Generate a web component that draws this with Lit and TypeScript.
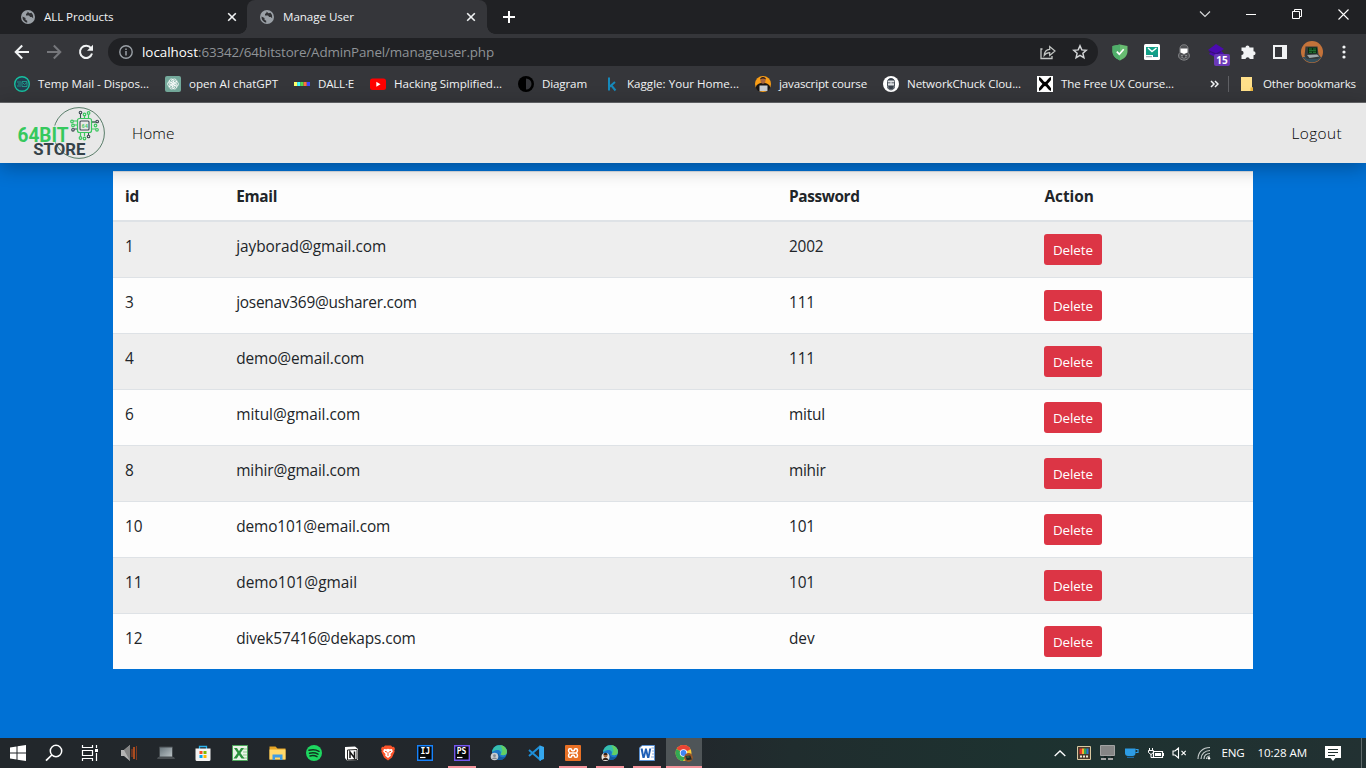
import { LitElement, html, css, svg, TemplateResult } from "lit";
import { customElement, property } from "lit/decorators.js";

/** A single line of text tracked so that it fills the given width. */
@customElement("fit-text")
class FitText extends LitElement {
  @property({ type: Number }) w = 0;
  @property() text = "";
  static styles = css`
    :host { display: inline-block; white-space: nowrap; flex: none; }
    .line { display: inline-block; white-space: pre; }
  `;
  updated() {
    const line = this.renderRoot.querySelector(".line") as HTMLElement;
    line.style.letterSpacing = "0px";
    const natural = line.getBoundingClientRect().width;
    line.style.letterSpacing = `${(this.w - natural) / this.text.length}px`;
    this.style.width = `${this.w}px`;
  }
  render() {
    return html`<span class="line">${this.text}</span>`;
  }
}

const fit = (text: string, w: number) => html`<fit-text .text=${text} .w=${w}></fit-text>`;
const icon = (w: number, h: number, body: unknown) =>
  html`<svg class="icon" width=${w} height=${h} viewBox="0 0 ${w} ${h}" fill="none">${body}</svg>`;

const globe = icon(14, 14, svg`<circle cx="7" cy="7" r="7" fill="#9aa0a6"/>
  <path d="M1.500 6.500 4.500 8v1.800l1.700 1v1.900A5.800 5.800 0 0 1 1.500 6.500ZM6.500 1.500v1.300L5 4v1.500h3l1.200 1.500h1.500l1.500 1.300a5.800 5.800 0 0 0-1.700-5.500L8.500 3.300z" fill="#303134"/>`);
const close = icon(10, 10, svg`<path d="m1.200 1.200 7.600 7.600M8.800 1.200 1.200 8.800" stroke="#f1f3f4" stroke-width="1.600"/>`);
const plus = icon(12, 12, svg`<path d="M6 0v12M0 6h12" stroke="#fff" stroke-width="2"/>`);
const winIcons = [
  icon(12, 8, svg`<path d="m1 1.500 5 5 5-5" stroke="#d5d6d8" stroke-width="1.200"/>`),
  icon(10, 10, svg`<path d="M0 5.500h10" stroke="#fff"/>`),
  icon(10, 10, svg`<path d="M.5 2.500h7v7h-7zM2.500 2.500v-2h7v7h-2" stroke="#fff"/>`),
  icon(11, 11, svg`<path d="m.5.5 10 10M10.500.5l-10 10" stroke="#fff" stroke-width="1.100"/>`),
];
const navIcons = [
  icon(16, 16, svg`<path d="M15 8H2M8.200 1.500 1.700 8l6.500 6.500" stroke="#f1f3f4" stroke-width="2"/>`),
  icon(16, 16, svg`<path d="M1 8h13M7.800 1.500 14.300 8l-6.500 6.500" stroke="#76777b" stroke-width="2"/>`),
  icon(16, 16, svg`<path d="M13 4.200A6.100 6.100 0 1 0 14 9.500" stroke="#f1f3f4" stroke-width="2"/><path d="M15 .8v6H9z" fill="#f1f3f4"/>`),
];
const info = icon(14, 14, svg`<circle cx="7" cy="7" r="6.200" stroke="#9aa0a6" stroke-width="1.400"/><path d="M7 6v4.500M7 3.400v1.500" stroke="#9aa0a6" stroke-width="1.500"/>`);
const share = icon(16, 16, svg`<path d="M2.500 5H1v9.500h11V12" stroke="#c4c7c5" stroke-width="1.300"/><path d="M4.200 11.500C4.500 7.500 6.500 5.600 9.700 5.400V2.500L15 7l-5.300 4.500V8.600c-2.300 0-4 .8-5.500 2.900Z" stroke="#c4c7c5" stroke-width="1.200"/>`);
const star = icon(16, 16, svg`<path d="m8 1.800 1.800 4.100 4.400.4-3.300 3 1 4.400L8 11.400l-3.900 2.300 1-4.400-3.300-3 4.400-.4z" stroke="#d2d4d6" stroke-width="1.500"/>`);

const extensions = [
  icon(16, 17, svg`<path d="M8 .5 15.500 2v5.500c0 4.500-4 7.500-7.500 9-3.500-1.500-7.500-4.500-7.500-9V2z" fill="#68bc71"/><path d="M8 .5V16.500C4.500 15 .5 12 .5 7.500V2z" fill="#4fae6a"/><path d="m4.800 7.600 2.500 2.600 4.400-5" stroke="#fff" stroke-width="1.700"/>`),
  icon(16, 16, svg`<rect width="16" height="16" rx="1.500" fill="#fff"/><path d="M2 3h12v8H2z" fill="#12a087"/><path d="m4 4 4 3.500L12.500 4" stroke="#fff" stroke-width="1.400"/><path d="M2 12.200h6v1H2z" fill="#8b98a0"/><path d="M9 11h5v2H9z" fill="#1b8f90"/>`),
  icon(14, 17, svg`<path d="M3 5C3 1.500 5 .8 7 .8s4 .7 4 4.200v3.500c2 2 2 5-.5 6.500C8 16.500 6 16.500 3.500 15 1 13.500 1 10.500 3 8.500z" fill="#505154" stroke="#86878a"/><path d="M3.500 4.500h7V8.500L7 10 3.500 8.500z" fill="#fff"/><path d="M4 11.500h6M4.500 13.500h5" stroke="#8d8e90"/><circle cx="7" cy="12.500" r="1.800" fill="#3a3b3e" stroke="#8d8e90" stroke-width=".7"/>`),
  html`<span class="badged">${icon(18, 16, svg`<path d="m9 0 8 5-3 2 3 2.500L10 14 2 10l2-2.500L1 6z" fill="#4b0bb0"/><path d="m2 7 7 3 5-2.500" stroke="#37107d" stroke-width="1.200"/>`)}<span class="count">15</span></span>`,
  icon(16, 16, svg`<path d="M1.500 3.500h4a2 2 0 1 1 4 0h4V7.200a2 2 0 1 1 0 4.100V15H9.800a2.200 2.200 0 0 0-4.300 0h-4v-4a2.100 2.100 0 0 0 0-4.200z" fill="#f1f3f4"/>`),
  icon(14, 14, svg`<path d="M1 1h12v12H1z" stroke="#f1f3f4" stroke-width="2"/><path d="M9 1h4v12H9z" fill="#f1f3f4"/>`),
  icon(22, 22, svg`<circle cx="11" cy="11" r="11" fill="#c4733a"/><path d="M1.500 16a11 11 0 0 0 19 0z" fill="#334f5c"/><path d="M4.500 5.500h12l1 8 2 2-3 2.500H6l-2.500-3z" fill="#343a3b"/><path d="M7 6.500h9v6H7z" fill="#072c10"/><path d="M8 8h3M12 8h3M8 9.700h7M8 11.300h3M12 11.300h3" stroke="#35a04b" stroke-width=".7"/><path d="m6 14 10-.5 2.500 2-10 1.500z" fill="#9ca8aa"/>`),
  icon(4, 16, svg`<circle cx="2" cy="3" r="1.600" fill="#f1f3f4"/><circle cx="2" cy="8" r="1.600" fill="#f1f3f4"/><circle cx="2" cy="13" r="1.600" fill="#f1f3f4"/>`),
];

const bookmarks: [string, number, TemplateResult][] = [
  ["Temp Mail - Dispos...", 111, icon(16, 16, svg`<circle cx="8" cy="8" r="7.300" fill="#233f50" stroke="#17c1a0" stroke-width="1.400"/><path d="M3 6h4M4 8h3M3 10h4M8 5.500h5v5H8zM8.500 6.500 10.500 8.500 13 6.500" stroke="#20a997" stroke-width=".8"/>`)],
  ["open AI chatGPT", 89, icon(16, 16, svg`<rect width="16" height="16" rx="2" fill="#74a99b"/><g stroke="#fff" stroke-width=".8">${[0, 60, 120, 180, 240, 300].map(a => svg`<path transform="rotate(${a} 8 8)" d="M6 9.200V4.800l2.200-1.500c2-1 4 .6 3.700 2.700L8 8.300"/>`)}</g>`)],
  ["DALL·E", 36, icon(16, 16, svg`<path d="M0 6h3.200v4H0z" fill="#ffff66"/><path d="M3.200 6h3.200v4H3.200z" fill="#42ffff"/><path d="M6.400 6h3.200v4H6.400z" fill="#51da4c"/><path d="M9.600 6h3.200v4H9.600z" fill="#ff6e3c"/><path d="M12.800 6H16v4h-3.200z" fill="#3c46ff"/>`)],
  ["Hacking Simplified...", 108, icon(16, 16, svg`<rect y="2.500" width="16" height="11.500" rx="2.500" fill="#f00"/><path d="M6.300 5.800v4.900l4.200-2.450z" fill="#fff"/>`)],
  ["Diagram", 45, icon(16, 16, svg`<circle cx="8" cy="8" r="8" fill="#000"/><path d="M8 2.500a5.500 5.500 0 0 1 0 11z" fill="#35363a"/>`)],
  ["Kaggle: Your Home...", 112, icon(16, 16, svg`<path d="M6 1.500v13M12 6 6.500 10.800M8 9l4.500 5.500" stroke="#1689bb" stroke-width="2"/>`)],
  ["javascript course", 88, icon(16, 16, svg`<circle cx="8" cy="8" r="8" fill="#f99d16"/><path d="M.8 12c0-3 2.700-5 7.200-5s7.200 2 7.200 5L13 15H3z" fill="#171413"/><ellipse cx="8" cy="4.500" rx="2.500" ry="3.300" fill="#a9673f"/><path d="M5 3.500C5 0 11 0 11 3.500 9 2.300 7 2.300 5 3.500" fill="#2a1a14"/><path d="M4.500 9.500h8V15h-8z" fill="#c9cdd2"/>`)],
  ["NetworkChuck Clou...", 114, icon(16, 16, svg`<circle cx="8" cy="8" r="8" fill="#fff"/><path d="M4.500 5.500C4.500 1.500 11.500 1.500 11.500 5.500v5C11.500 15 4.500 15 4.500 10.500z" stroke="#4a525b" stroke-width="1" fill="#dde0e3"/><path d="M5 4.500h6V3.500c-1.500-1.500-4.500-1.500-6 0zM5 9.500h6l-.5 3c-1.500 1-3.500 1-5 0z" fill="#38404a"/><path d="M5 6.800h2.500M8.500 6.800H11" stroke="#38404a" stroke-width=".8"/>`)],
  ["The Free UX Course...", 113, icon(16, 16, svg`<path d="M0 0h16v16H0z" fill="#fff"/><path d="M2 2.500c2 0 3 5 6 5s4-5 6-5M2 13.500c2 0 3-5 6-5s4 5 6 5" stroke="#000" stroke-width="2.800"/>`)],
];

const edge = (b: unknown) => icon(18, 18, svg`<circle cx="9.500" cy="8.500" r="7.500" fill="#1c78c8"/><path d="M2 8C3 2 8 .5 12 1.500c4 1 6 5 4.500 8-1 2-4 2-6 1 1.500-3-1-5-4-4.500C4 6.500 2.500 8 2 8" fill="#36bfae"/><path d="M10 1.200c5 0 8 5 6.500 8.300-1 2-4 2-6 1 3-3 2-7-.5-9.300" fill="#63cf62"/><path d="M8.500 9c0 4 4 5 7.500 3.500-3 4.500-8 4-10 1.500z" fill="#125a9d"/>${b}`);
const taskbar: { i: TemplateResult; state?: string }[] = [
  { i: icon(16, 16, svg`<path d="M0 2.400 6.500 1.500v6H0zM7.500 1.300 16 .1v7.400H7.500zM0 8.500h6.500v6L0 13.600zM7.500 8.500H16v7.400l-8.500-1.200z" fill="#fff"/>`) },
  { i: icon(18, 18, svg`<circle cx="11" cy="7" r="5.700" stroke="#fff" stroke-width="1.500"/><path d="M6.800 11 1 16.700" stroke="#fff" stroke-width="1.700"/>`), state: "search" },
  { i: icon(18, 16, svg`<path d="M1.500 0v2.500h10V0M1.500 5.500h10v5h-10zM1.500 16v-2.500h10V16M15.500 0v3M15.500 8v8" stroke="#fff" stroke-width="1.200"/><path d="M14 4h3v3h-3z" fill="#fff"/>`), state: "views" },
  { i: icon(18, 18, svg`<path d="M1 6h3l6-5v16l-6-5H1z" fill="#b4b4b4"/><path d="M4 6 10 1v16" fill="#858585"/><path d="M12 5v8" stroke="#8a3d20" stroke-width="1.300"/><path d="M14 3v12" stroke="#d85a1d" stroke-width="1.500"/><path d="M16.500 2v14" stroke="#81391f"/>`) },
  { i: icon(18, 18, svg`<defs><linearGradient id="lap" x2="1" y2="1"><stop stop-color="#66737a"/><stop offset="1" stop-color="#bcc4c7"/></linearGradient></defs><path d="M2.500 3h13v10h-13z" fill="url(#lap)" stroke="#454b4f"/><path d="M1 13h16l1 2H0z" fill="#4a4f53"/>`) },
  { i: icon(16, 17, svg`<path d="M4.500 5V1.500h7V5" stroke="#2cb4ee" stroke-width="1.300"/><path d="M.5 3.500h15v11a1.500 1.500 0 0 1-1.500 1.500H2a1.500 1.500 0 0 1-1.500-1.500z" fill="#f4f4f4"/><path d="M4.500 6h3v3h-3z" fill="#f25022"/><path d="M8.500 6h3v3h-3z" fill="#7fba00"/><path d="M4.500 10h3v3h-3z" fill="#00a4ef"/><path d="M8.500 10h3v3h-3z" fill="#ffb900"/>`) },
  { i: icon(16, 16, svg`<path d="M.5.5h15v15H.5z" fill="#e9f4e7" stroke="#4ba55a"/><path d="M11 4h4M11 7h4M11 10h4M11 13h4" stroke="#90c590"/><path d="M2 3h3l2 3.200L9 3h3L8.500 8l4 5.500h-3L7 10l-2.200 3.500H1.500l4-5.500z" fill="#2b913e"/>`) },
  { i: icon(17, 16, svg`<path d="M.5 1.500h6l2 2h8v11H.5z" fill="#e5a425"/><path d="M.5 4.500h16v10H.5z" fill="#ffd96b"/><path d="M3.500 15V9.500h10V15H11v-2.500H6V15z" fill="#3e9ce4"/>`) },
  { i: icon(16, 16, svg`<circle cx="8" cy="8" r="8" fill="#1ed760"/><path d="M3 5.300c3.500-1 7-.7 10 1M3.500 8.200c3-.8 6-.5 8.500.9M4 10.900c2.500-.6 5-.4 7 .8" stroke="#11331f" stroke-width="1.500" stroke-linecap="round"/>`) },
  { i: icon(15, 15, svg`<path d="m1 1 10-.6L14 3v11l-11 .6L1 12z" fill="#fff"/><path d="M3.500 4 13 3.500v10L3.500 14z" fill="#fff" stroke="#242424"/><path d="M6 12V6l4.500 6V5.500" stroke="#151515" stroke-width="1.500"/>`) },
  { i: icon(14, 16, svg`<path d="M4 .5h6L11.500 2l1.500-.2 1 2.200-.7 1.500.4 1L11 12.500 7 15.500 3 12.500.3 6.500l.4-1L0 4l1-2.200 1.500.2z" fill="#fb542b"/><path d="m3 4 2.500.3L7 3.800l1.500.5L11 4l.8 2.500L9.500 9l.3 1.700L7 13l-2.800-2.300L4.500 9 2.200 6.500z" fill="#fff"/><path d="m4 6.300 2 .8M10 6.300l-2 .8M6 10h2M7 7v2" stroke="#fb542b"/>`) },
  { i: icon(16, 16, svg`<path d="M.7.7h14.600v14.600H.7z" fill="#070707" stroke="#1682fb" stroke-width="1.400"/><path d="M3 12.500h5.500" stroke="#fff" stroke-width="1.200"/><text class="ide" x="3.400" y="9">IJ</text>`) },
  { state: "open", i: icon(16, 16, svg`<path d="M.7.7h14.600v14.600H.7z" fill="#070707" stroke="#7557ee" stroke-width="1.400"/><path d="M3 12.500h5.500" stroke="#fff" stroke-width="1.200"/><text class="ide" x="2.700" y="9">PS</text>`) },
  { i: edge(svg`<circle cx="4.500" cy="12.500" r="3.800" fill="#c8ccd0"/><circle cx="4.500" cy="11.700" r="1.400" fill="#858b92"/><path d="M2 15c1-2 4-2 5 0" fill="#858b92"/>`) },
  { i: icon(16, 16, svg`<path d="M12 1.500v13L1 5M12 1.500 1 11" stroke="#1e8fd9" stroke-width="2"/><path d="M11.500.2 16 2v12l-4.500 1.800z" fill="#35a8ef"/>`) },
  { state: "open", i: icon(16, 16, svg`<rect width="16" height="16" rx="1" fill="#e87025"/><path d="M5 8h6M6.800 6V5.300c0-1-.5-1.600-1.500-1.600h-.5c-1.600 0-1.800 2.800 0 4.300-1.800 1.500-1.600 4.300 0 4.300h.5c1 0 1.500-.6 1.500-1.600V10M9.200 6V5.300c0-1 .5-1.600 1.500-1.600h.5c1.600 0 1.800 2.800 0 4.300 1.800 1.500 1.600 4.300 0 4.300h-.5c-1 0-1.500-.6-1.500-1.600V10M6.800 5.800h2.400M6.800 10.200h2.400" stroke="#fff" stroke-width="1.500"/>`) },
  { state: "open", i: edge(svg`<circle cx="4.500" cy="13" r="4" fill="#e8e5df"/><circle cx="4.500" cy="11.500" r="2" fill="#a56a43"/><path d="M2.500 11c0-3 4-3 4 0M1.500 16c1-3 5-3 6 0" fill="#2f2019"/>`) },
  { state: "open", i: icon(16, 16, svg`<path d="M3 .5h12.500v15H.5V3z" fill="#fff" stroke="#5b91d2"/><path d="M12.500 3h2.500M13 6h2M13 9h2M12 12h3" stroke="#86a9da"/><path d="M1.500 3.500h2.200l1 6 1.400-6h1.700l1.400 6 1-6h2L10.300 13H8.200L6.900 8 5.600 13H3.500z" fill="#1f5fb6"/>`) },
  { state: "active", i: icon(18, 18, svg`<circle cx="8.500" cy="9" r="8" fill="#fcc934"/><path d="M8.500 9 1.600 5A8 8 0 0 1 15.500 5.200z" fill="#ea4335"/><path d="M1.600 5A8 8 0 0 0 8 17L11.500 11z" fill="#34a853"/><circle cx="8.500" cy="9" r="3.700" fill="#fff"/><circle cx="8.500" cy="9" r="2.900" fill="#4285f4"/><circle cx="13.500" cy="13.500" r="4.400" fill="#965829"/><path d="m10.300 12 5-.5 1.500 4-5 .7z" fill="#202827"/><path d="M11.500 13h3" stroke="#41804b"/>`) },
];

const tray = [
  icon(12, 7, svg`<path d="m.7 6 5.300-5 5.300 5" stroke="#fff" stroke-width="1.300"/>`),
  icon(14, 14, svg`<path d="M.5.500h13v13H.5z" fill="#4a3a2c" stroke="#d9c9a1"/><path d="M2.500 2.500h3V8h-3z" fill="#e2362c"/><path d="M5 2.500h2.500V8H5z" fill="#f3b12d"/><path d="M7 2.500h2.500V8H7z" fill="#31a951"/><path d="M9.500 2.500h2V8h-2z" fill="#2674d8"/><path d="M3 10.500h8" stroke="#efe7d2" stroke-width="2" stroke-dasharray="2 1"/>`),
  icon(15, 16, svg`<path d="M.5.500h14v10H.5z" fill="#858585" stroke="#a2a2a2"/><path d="M1 13h5v2H1zM8 13h5v2H8z" fill="#a5a5a5"/><path d="M4 12h3M11 12h3" stroke="#111"/>`),
  icon(14, 10, svg`<path d="M0 .5h10.500v4.500c0 2-1 3-3 3H3C1 8 0 7 0 5z" fill="#2d9ce5"/><path d="M10.500 1.500H13v3h-2.500" stroke="#2d9ce5" stroke-width="1.200"/><path d="M2 9.300h7" stroke="#1d77bd"/>`),
  icon(16, 13, svg`<path d="M5.500 4.500h9v6h-9zM15.500 6v3" stroke="#fff" stroke-width="1.200"/><path d="M7 6h6v3H7z" fill="#fff"/><path d="M1.500 1v2M4.500 1v2M.5 3.500h5v2L3 7.500.5 5.500zM3 7v3.500h2.500" stroke="#fff"/>`),
  icon(15, 12, svg`<path d="M1 4h2l3.500-3v10L3 8H1z" stroke="#fff" stroke-width="1.100"/><path d="m9.500 3.800 4.200 4.400M13.700 3.800 9.500 8.200" stroke="#fff" stroke-width="1.100"/>`),
  icon(14, 14, svg`<g stroke="#c6cccc" stroke-width="1.200"><path d="M1 13C1 6 6 1.500 13 1.500M4 13c0-5 4-8.500 9-8.500M7 13c0-3.500 2.500-5.500 6-5.500M9.500 13c0-1.500 1.500-3 3.500-3"/></g><circle cx="12" cy="12.300" r="1.200" fill="#fff"/>`),
];

const logo = html`<svg class="logo" width="88" height="54" viewBox="17 106 88 54" fill="none">
  <circle cx="79" cy="133" r="25.400" stroke="#48715a" stroke-width=".9"/>
  <path d="M17 125.500h52v17H17z" fill="#e8e8e8" opacity=".85"/>
  <g stroke="#3bc75f" stroke-width="1.200">
    <rect x="77.500" y="118.500" width="14" height="14" rx="2"/>
    <path d="M84.500 118v-3M88.500 118v-3M92 122h3M92 129h4M77 121h-4M77 125h-3M80.500 133v3.500M84.500 133v3"/>
    <circle cx="84.500" cy="114.500" r="1.300"/><circle cx="88.600" cy="113" r="1.300"/><circle cx="95.500" cy="125.500" r="1.300"/><circle cx="97" cy="129.800" r="1.300"/><circle cx="72" cy="121.500" r="1.300"/><circle cx="73" cy="125.500" r="1.300"/><circle cx="80.500" cy="138" r="1.300"/><circle cx="84.500" cy="138.500" r="1.300"/>
  </g>
  <g stroke="#3c4a52" stroke-width="1.100">
    <rect x="80" y="121" width="9" height="9" rx="1"/>
    <path d="M80.500 118v-4M92 122h4M77 129h-3M88.500 133v2"/>
    <circle cx="80.500" cy="112.500" r="1.300"/><circle cx="97.200" cy="121.500" r="1.300"/><circle cx="73" cy="129.800" r="1.300"/><circle cx="88.500" cy="136.500" r="1.300"/>
  </g>
  <text class="chip" x="81.700" y="127.500" textLength="6">64</text>
  <text class="bit" x="17.500" y="141.500" textLength="51" lengthAdjust="spacingAndGlyphs">64BIT</text>
  <text class="store" x="33.300" y="155.300" textLength="52" lengthAdjust="spacingAndGlyphs">STORE</text>
</svg>`;

const users: [string, number, string, number, string, number][] = [
  ["1", 8.6, "jayborad@gmail.com", 150, "2002", 34.5],
  ["3", 8.6, "josenav369@usharer.com", 180.5, "111", 26],
  ["4", 8.6, "demo@email.com", 128, "111", 26],
  ["6", 8.6, "mitul@gmail.com", 124, "mitul", 36],
  ["8", 8.6, "mihir@gmail.com", 124, "mihir", 36.5],
  ["10", 17.3, "demo101@email.com", 154, "101", 26],
  ["11", 17.3, "demo101@gmail", 121, "101", 26],
  ["12", 17.3, "divek57416@dekaps.com", 179.5, "dev", 25.5],
];

@customElement("app-root")
class AppRoot extends LitElement {
  static styles = css`
    :host { display: flex; flex-direction: column; width: 1366px; height: 768px; overflow: hidden; font-family: "Open Sans", "Noto Sans", sans-serif; background: #0071d5; }
    * { box-sizing: border-box; }
    .icon { display: block; flex: none; }
    .tabs { height: 34px; background: #202124; display: flex; flex: none; padding-left: 7px; color: #f1f3f4; font-size: 11.6px; }
    .tab { width: 240px; height: 34px; display: flex; align-items: center; gap: 9px; padding: 0 11px 0 14px; }
    .tab.first { padding-right: 10px; }
    .tab fit-text { margin-right: auto; padding-bottom: 2px; }
    .tab.on { background: #35363a; border-radius: 8px 8px 0 0; position: relative; padding: 0 11px 0 13px; }
    .tab.on::before, .tab.on::after { content: ""; position: absolute; bottom: 0; width: 8px; height: 8px; }
    .tab.on::before { left: -8px; background: radial-gradient(circle at 0 0, #202124 7.5px, #35363a 8px); }
    .tab.on::after { right: -8px; background: radial-gradient(circle at 100% 0, #202124 7.5px, #35363a 8px); }
    .add { display: flex; align-items: center; padding-left: 16px; margin-right: auto; }
    .win { width: 46px; height: 28px; display: flex; align-items: center; justify-content: center; }
    .toolbar { height: 34px; flex: none; background: #35363a; display: flex; align-items: center; padding: 2px 6px 0 6px; }
    .tool { width: 32px; height: 28px; display: flex; align-items: center; justify-content: center; flex: none; }
    .omni { margin: 0 6px; flex: 1; height: 28px; border-radius: 14px; background: #202124; display: flex; align-items: center; padding: 0 2px 0 11px; color: #8f9397; font-size: 13.4px; }
    .omni .host { color: #fff; margin-left: 9px; }
    .omni .path { margin-right: auto; }
    .badged { position: relative; }
    .count { position: absolute; left: 7px; top: 10px; width: 16px; height: 12px; border-radius: 2px; background: #6b39b7; color: #fff; font-size: 10px; font-weight: 700; line-height: 12px; text-align: center; }
    .marks { height: 35px; flex: none; background: #35363a; border-bottom: 1px solid #68696c; display: flex; align-items: center; gap: 16px; padding: 0 0 2px 14px; color: #f1f3f4; font-size: 11.6px; }
    .marks fit-text { padding-bottom: 2px; }
    .mark { display: flex; align-items: center; gap: 8px; }
    .more { display: flex; align-items: center; margin-left: 20px; }
    .sep { width: 1px; height: 16px; background: #5f6064; margin-left: 9px; }
    .folder { display: flex; gap: 10px; align-items: center; margin-left: 12px; }
    .page { flex: 1; }
    nav { height: 60px; background: #e8e8e8; box-shadow: 0 4px 20px rgba(0,0,0,.3); position: relative; display: flex; align-items: center; padding: 0 24px 0 17px; color: #000; font-size: 15.4px; font-weight: 300; }
    .logo { display: block; }
    .home { margin: 1px auto 0 27px; }
    .logout { margin-top: 1px; }
    .bit { font: 700 20px "Roboto", sans-serif; fill: #36c95d; }
    .store { font: 700 17px "Roboto", sans-serif; fill: #354249; }
    .chip { font: 700 5px "Liberation Sans", sans-serif; fill: #3bc75f; }
    .ide { font: 700 8px "DejaVu Sans Mono", monospace; fill: #fff; }
    .table { width: 1140px; margin: 8px auto 0; background: #fdfdfd; color: #212529; font-size: 15.4px; line-height: 24px; }
    .row { display: grid; grid-template-columns: 111.2px 552.8px 255.4px 1fr; border-top: 1px solid #dee2e6; height: 56px; padding-top: 12px; }
    .row > * { padding-left: 12px; }
    .row > span > fit-text { padding-top: 1px; }
    .row.head { height: 51px; border-bottom: 2px solid #dee2e6; font-weight: 700; }
    .row.head + .row { border-top: 0; height: 55px; }
    .row:nth-child(even) { background: #eee; }
    .del { display: flex; align-items: center; justify-content: center; width: 58px; height: 31px; border: 0; padding: 0 1px 0 0; border-radius: 3px; background: #dc3545; color: #fff; font: 13.4px "Open Sans", sans-serif; }
    .taskbar { height: 30px; flex: none; display: flex; color: #fff; font-size: 11.6px; background: linear-gradient(90deg, #22272b 0, #22272c 50%, #202d2e 58%, #1d3230 75%, #223132 100%); }
    .apps { display: flex; gap: 1px; margin-right: auto; }
    .app { width: 36px; display: flex; align-items: center; justify-content: center; position: relative; }
    .app.search { padding-right: 2px; }
    .app.views { padding-right: 4px; }
    .app.active { background: #4f5558; }
    .app.open::after, .app.active::after { content: ""; position: absolute; bottom: 0; left: 4px; right: 4px; height: 2px; background: #f4939b; }
    .app.active::after { left: 0; right: 0; }
    .tray { display: flex; align-items: center; }
    .tray fit-text { padding-bottom: 2px; }
    .slot { width: 24px; display: flex; justify-content: center; }
    .lang { margin-left: 6px; }
    .clock { margin: 0 18px 0 13px; }
    .peek { width: 1px; height: 30px; background: #5f6a6b; margin: 0 4px 0 20px; }
  `;

  render() {
    return html`
      <div class="tabs">
        <div class="tab first">${globe}${fit("ALL Products", 69.5)}${close}</div>
        <div class="tab on">${globe}${fit("Manage User", 71)}${close}</div>
        <div class="add">${plus}</div>
        ${winIcons.map(i => html`<div class="win">${i}</div>`)}
      </div>
      <div class="toolbar">
        ${navIcons.map(i => html`<div class="tool">${i}</div>`)}
        <div class="omni">
          ${info}
          <span class="host">${fit("localhost", 56)}</span><span class="path">${fit(":63342/64bitstore/AdminPanel/manageuser.php", 296)}</span>
          <div class="tool">${share}</div><div class="tool">${star}</div>
        </div>
        ${extensions.map(i => html`<div class="tool">${i}</div>`)}
      </div>
      <div class="marks">
        ${bookmarks.map(([t, w, i]) => html`<div class="mark">${i}${fit(t, w)}</div>`)}
        <div class="more">
          ${icon(9, 8, svg`<path d="m1 1 3 3-3 3M5 1l3 3-3 3" stroke="#f1f3f4" stroke-width="1.500"/>`)}
          <span class="sep"></span>
          <div class="folder">${icon(12, 14, svg`<path d="M0 0h11v10l1 1v3H0z" fill="#ffe08a"/><path d="M9.500 14v-3.500H12V14z" fill="#efb83c"/>`)}${fit("Other bookmarks", 93)}</div>
        </div>
      </div>
      <div class="page">
        <nav>${logo}<span class="home">${fit("Home", 42.5)}</span><span class="logout">${fit("Logout", 50.5)}</span></nav>
        <div class="table">
          <div class="row head"><span>${fit("id", 14)}</span><span>${fit("Email", 41)}</span><span>${fit("Password", 70.5)}</span><span>${fit("Action", 49.5)}</span></div>
          ${users.map(([id, iw, mail, mw, pw, ww]) => html`<div class="row">
            <span>${fit(id, iw)}</span><span>${fit(mail, mw)}</span><span>${fit(pw, ww)}</span>
            <span><button class="del">${fit("Delete", 40)}</button></span>
          </div>`)}
        </div>
      </div>
      <div class="taskbar">
        <div class="apps">${taskbar.map(a => html`<div class="app ${a.state ?? ""}">${a.i}</div>`)}</div>
        <div class="tray">
          ${tray.map(i => html`<div class="slot">${i}</div>`)}
          <span class="lang">${fit("ENG", 23)}</span>
          <span class="clock">${fit("10:28 AM", 49.500)}</span>
          ${icon(16, 17, svg`<path d="M0 1h16v12h-5.500L8 16l-2.500-3H0z" fill="#fff"/><path d="M3 4.500h10M3 7.500h10M3 10.500h7" stroke="#20302f" stroke-width="1.200"/>`)}
          <span class="peek"></span>
        </div>
      </div>`;
  }
}
